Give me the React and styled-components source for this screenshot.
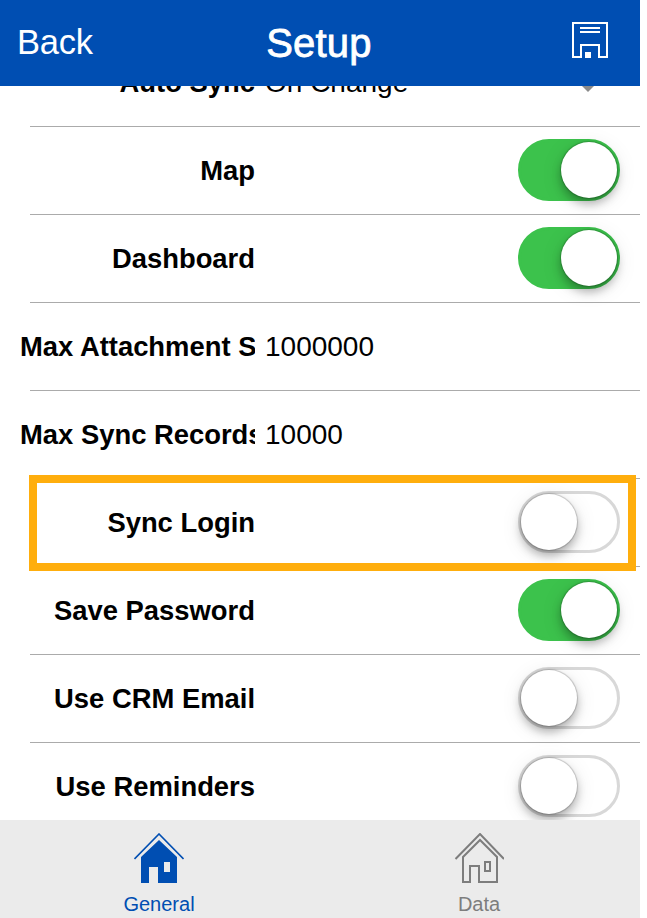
import React from 'react'
import styled, { createGlobalStyle } from 'styled-components'

const rows = [
  { label: 'Auto Sync', value: 'On Change', select: true },
  { label: 'Map', on: true },
  { label: 'Dashboard', on: true },
  { label: 'Max Attachment Size', value: '1000000' },
  { label: 'Max Sync Records', value: '10000' },
  { label: 'Sync Login', on: false, marked: true },
  { label: 'Save Password', on: true },
  { label: 'Use CRM Email', on: false },
  { label: 'Use Reminders', on: false },
]

function SaveIcon() {
  return (
    <svg width="36" height="36" viewBox="0 0 36 36" fill="none" stroke="#fff" strokeWidth="2">
      <path d="M1 1H35V35H27V23H9V35H1Z" />
      <path d="M8 6H28M8 10H28" />
      <rect x="13" y="30" width="6" height="6" fill="#fff" stroke="none" />
    </svg>
  )
}

function HomeFilled() {
  return (
    <svg width="50" height="52" viewBox="0 0 50 52">
      <path d="M0.5 26L25 1L49.5 26" fill="none" stroke="currentColor" strokeWidth="1.6" />
      <path d="M7 24L25 7L43 24V50H24V34H15V50H7Z" fill="currentColor" />
      <rect x="30" y="29" width="6" height="10" fill="#ebebeb" />
    </svg>
  )
}

function HomeOutline() {
  return (
    <svg width="50" height="52" viewBox="0 0 50 52" fill="none" stroke="currentColor" strokeWidth="2">
      <path d="M1.5 26L26 1L50 26" />
      <path d="M9 24L26 7L43 24V49H25V33H16V49H9Z" />
      <rect x="31" y="29" width="5" height="9" />
    </svg>
  )
}

export default function App() {
  return (
    <Screen>
      <GlobalStyle />
      <Header>
        <BackLabel>Back</BackLabel>
        <Title>Setup</Title>
        <SaveButton><SaveIcon /></SaveButton>
      </Header>
      <Scroller>
        <List>
          {rows.map((row) => (
            <Row key={row.label}>
              <Label>{row.label}</Label>
              {row.value && <Value>{row.value}</Value>}
              {row.select && <Caret />}
              {row.on !== undefined && (
                <Switch $on={row.on}><Knob $on={row.on} /></Switch>
              )}
              {row.marked && <Highlight />}
            </Row>
          ))}
        </List>
      </Scroller>
      <TabBar>
        <Tab $active>
          <HomeFilled />
          <TabLabel>General</TabLabel>
        </Tab>
        <Tab>
          <HomeOutline />
          <TabLabel>Data</TabLabel>
        </Tab>
      </TabBar>
    </Screen>
  )
}

const GlobalStyle = createGlobalStyle`
  html, body {
    margin: 0;
    padding: 0;
    background: #fff;
  }
`;

const Screen = styled.div`
  width: 640px;
  height: 918px;
  display: flex;
  flex-direction: column;
  overflow: hidden;
  font-family: "Liberation Sans", Arial, sans-serif;
  color: #000;
`;

const Header = styled.header`
  flex: none;
  height: 86px;
  background: #004eb2;
  color: #fff;
  display: grid;
  grid-template-columns: 1fr auto 1fr;
  align-items: center;
  padding: 0 32px 0 17px;
`;

const BackLabel = styled.div`
  font-size: 34.5px;
  font-weight: 400;
  letter-spacing: -0.2px;
  margin-top: -1px;
`;

const Title = styled.h1`
  margin: 0 0 0 13px;
  font-size: 40px;
  font-weight: 400;
  letter-spacing: 0.2px;
  -webkit-text-stroke: 0.8px #fff;
`;

const SaveButton = styled.div`
  justify-self: end;
  display: flex;
  margin-top: -6px;
`;

const Scroller = styled.main`
  flex: 1;
  overflow: hidden;
`;

const List = styled.div`
  margin-top: -47px;
`;

const Row = styled.div`
  position: relative;
  height: 88px;
  box-sizing: border-box;
  padding: 0 20px;
  display: flex;
  align-items: center;
  background: linear-gradient(#ababab, #ababab) no-repeat 30px 100% / 610px 1px;
`;

const Label = styled.div`
  flex: none;
  width: 235px;
  overflow: hidden;
  white-space: nowrap;
  text-align: right;
  font-size: 27.4px;
  font-weight: 700;
`;

const Value = styled.div`
  margin-left: 10px;
  font-size: 28px;
  white-space: nowrap;
`;

const Caret = styled.div`
  position: absolute;
  left: 582px;
  top: 47px;
  width: 0;
  height: 0;
  border-left: 6px solid transparent;
  border-right: 6px solid transparent;
  border-top: 6px solid #8a8a8a;
`;

const Switch = styled.div`
  margin: -2px 0 0 auto;
  width: 102px;
  height: 62px;
  box-sizing: border-box;
  border-radius: 31px;
  border: 3px solid ${(p) => (p.$on ? '#3cc24c' : '#d8d8d8')};
  background: ${(p) => (p.$on ? '#3cc24c' : '#fff')};
  display: flex;
  align-items: center;
  justify-content: ${(p) => (p.$on ? 'flex-end' : 'flex-start')};
`;

const Knob = styled.div`
  width: 56px;
  height: 56px;
  border-radius: 50%;
  background: #fff;
  box-shadow: 0 0 1px 1px rgba(0, 0, 0, 0.18), 0 6px 10px rgba(0, 0, 0, 0.28), 0 4px 22px rgba(0, 0, 0, 0.1);
`;

const Highlight = styled.div`
  position: absolute;
  left: 29px;
  top: -4px;
  width: 607px;
  height: 96px;
  box-sizing: border-box;
  border: 8px solid #ffae0d;
  pointer-events: none;
`;

const TabBar = styled.nav`
  flex: none;
  position: relative;
  height: 98px;
  background: #ebebeb;
  display: grid;
  grid-template-columns: 1fr 1fr;
`;

const Tab = styled.div`
  display: flex;
  flex-direction: column;
  align-items: center;
  padding: 13px 2px 0 0;
  color: ${(p) => (p.$active ? '#004eb2' : '#7d7d7d')};
`;

const TabLabel = styled.div`
  font-size: 20px;
  line-height: 24px;
  margin-top: 7px;
`;
